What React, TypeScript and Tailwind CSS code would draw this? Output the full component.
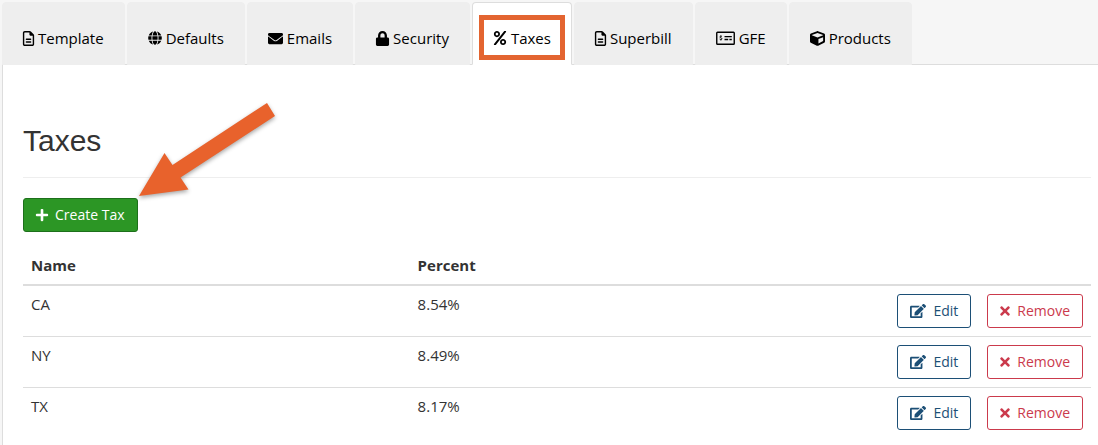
import { useState } from 'react';
import type { ReactNode } from 'react';
import { FaCube, FaEdit, FaEnvelope, FaGlobe, FaLock, FaPercent, FaPlus, FaTimes } from 'react-icons/fa';
import { FaRegFileLines } from 'react-icons/fa6';

function MoneyCheckIcon() {
  return (
    <svg width="19" height="15" viewBox="0 0 19 15" fill="none" stroke="currentColor">
      <rect x="0.75" y="1.25" width="17.5" height="12" rx="0.8" strokeWidth="1.4" />
      <path d="M5.9 5.6c-.5-.5-2.1-.5-2.1.4 0 1.1 2.2.6 2.2 1.8 0 .9-1.7.9-2.3.3M4.9 4.4v.8M4.9 8.6v.9" strokeWidth="1" />
      <path d="M8.5 5.7h7.3M8.5 8.5h3.7M13.4 8.5h2.4" strokeWidth="1.3" />
    </svg>
  );
}

const TABS: { label: string; icon: ReactNode }[] = [
  { label: 'Template', icon: <FaRegFileLines size={15} className="-mx-[2px]" /> },
  { label: 'Defaults', icon: <FaGlobe size={14} /> },
  { label: 'Emails', icon: <FaEnvelope size={15} /> },
  { label: 'Security', icon: <FaLock size={15} className="-mx-px" /> },
  { label: 'Taxes', icon: <FaPercent size={14} /> },
  { label: 'Superbill', icon: <FaRegFileLines size={15} className="-mx-[2px]" /> },
  { label: 'GFE', icon: <MoneyCheckIcon /> },
  { label: 'Products', icon: <FaCube size={15} /> },
];

const TAXES = [
  { name: 'CA', percent: '8.54%' },
  { name: 'NY', percent: '8.49%' },
  { name: 'TX', percent: '8.17%' },
];

export default function App() {
  const [active, setActive] = useState('Taxes');

  return (
    <div className="min-h-screen bg-[#f6f6f6] pl-[2px] pt-[2px] font-['Open_Sans',sans-serif] text-[14px] leading-[21px] text-[#333]">
      <div role="tablist" className="flex gap-[2px] border-b border-[#ddd]">
        {TABS.map(({ label, icon }) => (
          <button
            key={label}
            type="button"
            role="tab"
            aria-selected={active === label}
            onClick={() => setActive(label)}
            className={`relative -mb-px flex items-center gap-1 rounded-t border px-5 pb-4 pt-[25px] text-[15px] leading-[20px] text-black ${
              active === label ? 'border-[#ddd] border-b-white bg-white' : 'border-[#eee] bg-[#eee]'
            }`}
          >
            {icon}
            {label}
            {label === 'Taxes' && (
              <span className="pointer-events-none absolute inset-x-[6px] bottom-[4px] top-[12px] border-[5px] border-[#e36430]" />
            )}
          </button>
        ))}
      </div>

      <main className="relative min-h-[380px] border-l border-[#ddd] bg-white pb-4 pl-5 pr-[7px] pt-[58px]">
        <h1 className="border-b border-[#eee] pb-[18px] font-['Liberation_Sans',sans-serif] text-[30px] leading-[36px]">
          Taxes
        </h1>
        <button
          type="button"
          className="mt-5 flex h-[34px] items-center gap-[7px] rounded-[3px] border border-[#1d701b] bg-[#2c9625] px-3 pb-px text-white"
        >
          <FaPlus size={14} className="-mx-px" />
          Create Tax
        </button>

        <table className="mt-[15px] w-full table-fixed border-collapse text-left">
          <thead>
            <tr className="border-b-2 border-[#ddd] text-[15px]">
              <th className="w-[36.2%] p-2 font-bold">Name</th>
              <th className="p-2 font-bold">Percent</th>
              <th className="p-2" aria-label="Actions" />
            </tr>
          </thead>
          <tbody>
            {TAXES.map(({ name, percent }) => (
              <tr key={name} className="border-b border-[#ddd] align-top last:border-b-0">
                <td className="p-2 text-[15px]">{name}</td>
                <td className="p-2 text-[15px]">{percent}</td>
                <td className="p-2">
                  <div className="flex justify-end gap-4">
                    <button
                      type="button"
                      className="flex h-[34px] items-center gap-[7px] rounded-[3px] border border-[#1c4f76] px-3 pb-px text-[#1c4f76]"
                    >
                      <FaEdit size={16} />
                      Edit
                    </button>
                    <button
                      type="button"
                      className="flex h-[34px] items-center gap-[7px] rounded-[3px] border border-[#cb3a4c] px-3 pb-px text-[#cb3a4c]"
                    >
                      <FaTimes size={14} className="-mx-[2px]" />
                      Remove
                    </button>
                  </div>
                </td>
              </tr>
            ))}
          </tbody>
        </table>

        {/* Arrow pointing at the create button */}
        <svg
          className="pointer-events-none absolute left-[132px] top-[33px] drop-shadow-[0_2px_2px_rgba(0,0,0,0.35)]"
          width="146"
          height="104"
          viewBox="0 0 146 104"
          aria-hidden="true"
        >
          <path d="M4 98 29.5 55 37.5 67 132 5 140 18 45.5 79.5 53.5 91.5Z" fill="#e8622c" />
        </svg>
      </main>
    </div>
  );
}
